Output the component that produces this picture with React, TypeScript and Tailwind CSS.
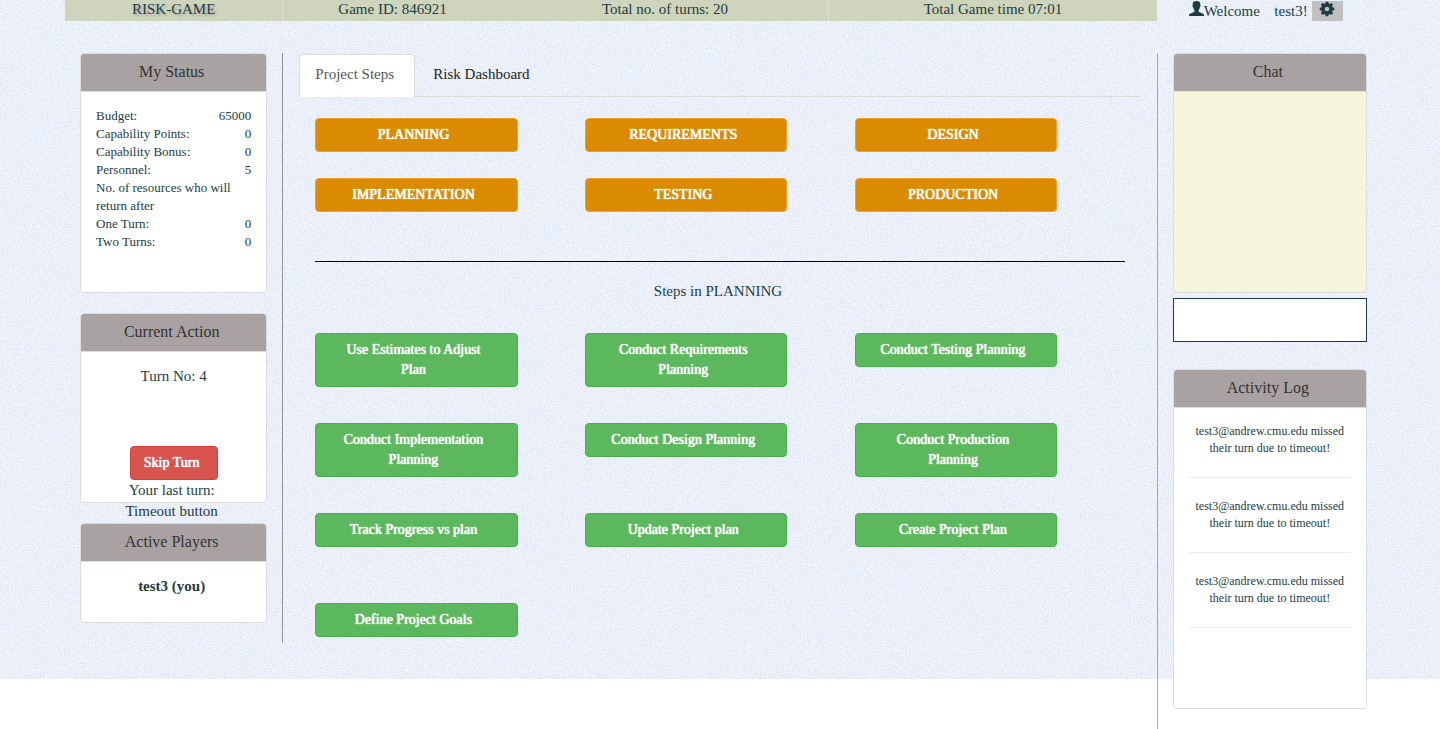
import type { ReactNode } from "react";

const status = [
  { label: "Budget:", value: "65000" },
  { label: "Capability Points:", value: "0" },
  { label: "Capability Bonus:", value: "0" },
  { label: "Personnel:", value: "5" },
  { label: "No. of resources who will return after", value: "" },
  { label: "One Turn:", value: "0" },
  { label: "Two Turns:", value: "0" },
];

const phases = ["PLANNING", "REQUIREMENTS", "DESIGN", "IMPLEMENTATION", "TESTING", "PRODUCTION"];

const steps = [
  "Use Estimates to Adjust Plan",
  "Conduct Requirements Planning",
  "Conduct Testing Planning",
  "Conduct Implementation Planning",
  "Conduct Design Planning",
  "Conduct Production Planning",
  "Track Progress vs plan",
  "Update Project plan",
  "Create Project Plan",
  "Define Project Goals",
];

const log = [1, 2, 3].map((id) => ({ id, text: "test3@andrew.cmu.edu missed their turn due to timeout!" }));

function Linen() {
  return (
    <svg className="absolute inset-x-0 top-0 -z-10 h-[calc(100%-50px)] w-full" aria-hidden="true">
      <filter id="linen" x="0" y="0" width="100%" height="100%" colorInterpolationFilters="sRGB">
        <feTurbulence type="fractalNoise" baseFrequency="0.7 0.7" numOctaves="2" seed="4" />
        <feColorMatrix values="0.18 0 0 0 0.828  0.15 0 0 0 0.863  0.06 0 0 0 0.948  0 0 0 0 1" />
      </filter>
      <rect width="100%" height="100%" fill="#e9eef9" />
      <rect width="100%" height="100%" filter="url(#linen)" />
    </svg>
  );
}

function UserIcon() {
  return (
    <svg viewBox="0 0 15 15" className="h-[15px] w-[15px]" fill="currentColor" aria-hidden="true">
      <path d="M7.5 0C5 0 3.700 1.200 3.700 3v1.500c-.4.3-.3 1.300.2 1.600C4.100 7.200 4.700 8.200 5.400 8.900v1.500c0 .3-.2.500-.5.700L1 12.800c-.7.3-1 .7-1 1.300V15h15v-.9c0-.6-.3-1-1-1.300l-3.900-1.700c-.3-.2-.5-.4-.5-.7V8.900c.7-.7 1.300-1.700 1.500-2.800.5-.3.6-1.300.2-1.600V3C11.300 1.200 10 0 7.5 0z" />
    </svg>
  );
}

function CogIcon() {
  return (
    <svg viewBox="-8 -8 16 16" className="h-4 w-4" fill="currentColor" aria-hidden="true">
      <circle r="4" fill="none" stroke="currentColor" strokeWidth="3.4" />
      {[0, 45, 90, 135, 180, 225, 270, 315].map((angle) => (
        <path key={angle} d="M-1.800-5L-1.300-7.300H1.300L1.800-5z" transform={`rotate(${angle})`} />
      ))}
    </svg>
  );
}

function Panel({ title, className, children }: { title: string; className: string; children?: ReactNode }) {
  return (
    <section className={`flex flex-col rounded border border-[#ddd] ${className}`}>
      <h2 className="rounded-t-[3px] border-b border-[#ddd] bg-[#a8a2a2] pt-2 pr-1 pb-[9px] text-center text-base leading-5 text-[#333]">
        {title}
      </h2>
      {children}
    </section>
  );
}

function StepButton({ children, className }: { children: ReactNode; className: string }) {
  return (
    <button
      type="button"
      className={`w-3/4 rounded border py-1.5 pr-[22px] pl-4 text-center text-sm leading-5 text-white [text-shadow:0_0_1px_#fff,0_0_1px_#fff] ${className}`}
    >
      {children}
    </button>
  );
}

export default function App() {
  return (
    <div className="relative isolate bg-white px-[65px] font-['Liberation_Serif','Times_New_Roman',serif] text-[15px] leading-[21px] text-[#1c3c42]">
      <Linen />

      <header className="grid grid-cols-12">
        <div className="col-span-10 grid grid-cols-10 bg-[#cfd4bc] text-center leading-[19px]">
          <div className="col-span-2 border-r border-[#dde0d0] pb-0.5 [text-shadow:2px_2px_2px_#aaa]">RISK-GAME</div>
          <div className="col-span-2">Game ID: 846921</div>
          <div className="col-span-3 border-r border-[#dde0d0]">Total no. of turns: 20</div>
          <div className="col-span-3">Total Game time 07:01</div>
        </div>
        <div className="col-span-2 flex items-start pt-px pl-8 leading-5">
          <UserIcon />
          <span className="flex w-[108px] justify-between pr-1">
            <span>Welcome</span> <span>test3!</span>
          </span>
          <button type="button" aria-label="Settings" className="flex h-5 w-[31px] justify-center bg-[#c0c0c0]">
            <CogIcon />
          </button>
        </div>
      </header>

      <main className="grid grid-cols-12 items-start pt-8">
        <aside className="col-span-2 border-r border-[#8f949c] px-[15px] pb-5">
          <Panel title="My Status" className="h-60 bg-white">
            <dl className="px-[15px] pt-[15px] text-[13px] leading-[18px]">
              {status.map((row) => (
                <div key={row.label} className="flex justify-between">
                  <dt>{row.label}</dt>
                  <dd>{row.value}</dd>
                </div>
              ))}
            </dl>
          </Panel>

          <Panel title="Current Action" className="mt-5 h-[190px] bg-white">
            <div className="flex flex-col items-center px-[15px] pt-3.5 text-center">
              <p>Turn No: 4</p>
              <button
                type="button"
                className="mt-[59px] h-[34px] w-[88px] shrink-0 rounded border border-[#d43f3a] bg-[#d9534f] pr-1 text-sm leading-5 text-white [text-shadow:0_0_1px_#fff,0_0_1px_#fff]"
              >
                Skip Turn
              </button>
              <p className="pr-1">
                Your last turn:
                <br />
                Timeout button
              </p>
            </div>
          </Panel>

          <Panel title="Active Players" className="mt-5 h-[100px] bg-white">
            <p className="pt-3.5 pr-1 text-center font-bold">test3 (you)</p>
          </Panel>
        </aside>

        <div className="col-span-8 px-4">
          <nav className="mt-px flex gap-0.5 border-b border-[#ddd]">
            <a
              href="#steps"
              className="-mb-px min-w-[116px] rounded-t border border-b-0 border-[#ddd] bg-white px-[15px] pt-[9px] pb-3 text-[#555]"
            >
              Project Steps
            </a>
            <a href="#risk" className="px-4 pt-2.5 pb-[11px] text-[#222]">
              Risk Dashboard
            </a>
          </nav>

          <div className="px-4 pt-[21px]">
            <div className="grid auto-rows-[60px] grid-cols-3 items-start">
              {phases.map((phase) => (
                <StepButton key={phase} className="border-[#f0a030] bg-[#db8b00]">
                  {phase}
                </StepButton>
              ))}
            </div>
            <hr className="mt-[23px] border-black" />
            <h3 className="mt-[19px] pr-1 text-center">Steps in PLANNING</h3>
            <div className="mt-[31px] grid auto-rows-[90px] grid-cols-3 items-start">
              {steps.map((step) => (
                <StepButton key={step} className="border-[#4cae4c] bg-[#5cb85c]">
                  {step}
                </StepButton>
              ))}
            </div>
          </div>
        </div>

        <aside className="col-span-2 border-l border-[#a3a7b0] pr-2 pb-5 pl-[15px]">
          <Panel title="Chat" className="h-60 bg-[#f5f5dc]" />
          <input
            type="text"
            aria-label="Chat message"
            className="mt-[5px] block h-11 w-full border border-[#1c3c42] bg-white px-3"
          />
          <Panel title="Activity Log" className="mt-[27px] h-[340px] bg-white">
            <ul className="px-[15px] pt-[15px] text-center text-xs leading-[17px]">
              {log.map((entry) => (
                <li key={entry.id} className="mb-5 border-b border-[#eee] pb-5">
                  {entry.text}
                </li>
              ))}
            </ul>
          </Panel>
        </aside>
      </main>
    </div>
  );
}
